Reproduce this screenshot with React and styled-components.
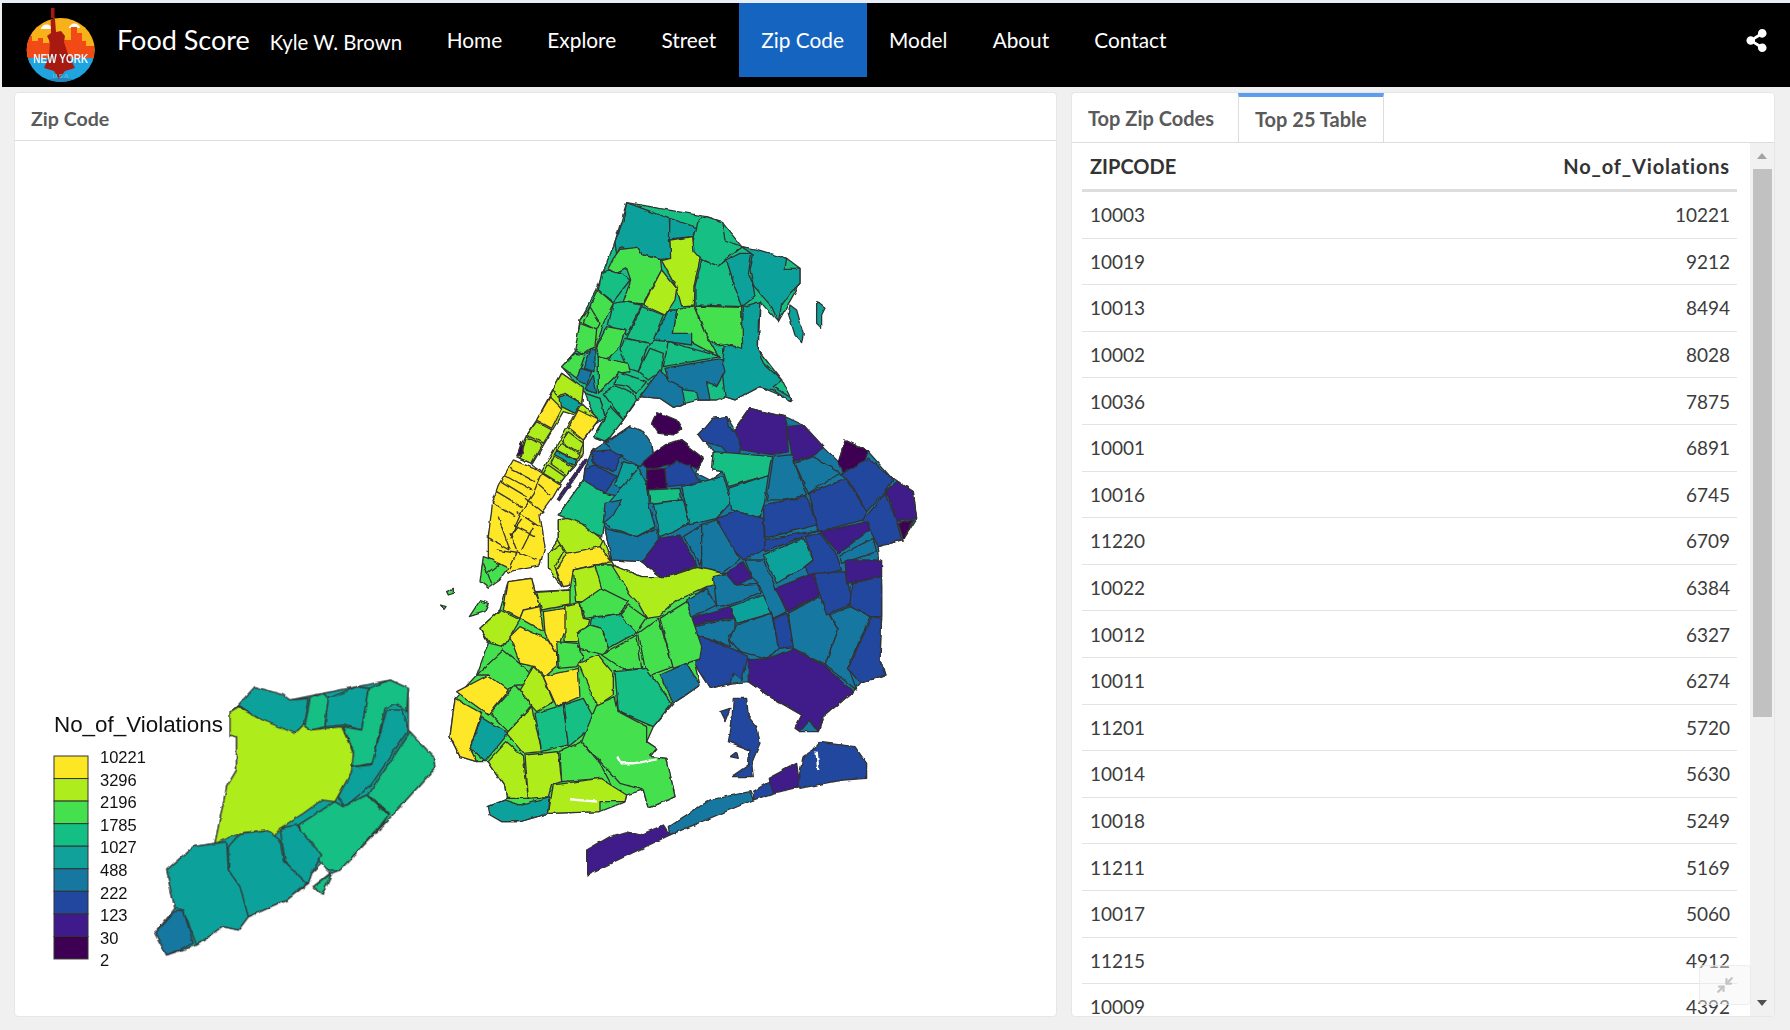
import React from "react";
import styled, { createGlobalStyle } from "styled-components";
import { FaShareAlt } from "react-icons/fa";
import { Minimize2 } from "lucide-react";

const NAV_ITEMS = ["Home", "Explore", "Street", "Zip Code", "Model", "About", "Contact"];

const ROWS = [
  ["10003", 10221], ["10019", 9212], ["10013", 8494], ["10002", 8028], ["10036", 7875],
  ["10001", 6891], ["10016", 6745], ["11220", 6709], ["10022", 6384], ["10012", 6327],
  ["10011", 6274], ["11201", 5720], ["10014", 5630], ["10018", 5249], ["11211", 5169],
  ["10017", 5060], ["11215", 4912], ["10009", 4392]
];

const COLORS = ["#fde725", "#aeec1e", "#44e04e", "#14bf84", "#11a19b", "#1678a1", "#21479f", "#3f1a8a", "#3d0052"];
const LEGEND = ["10221", "3296", "2196", "1785", "1027", "488", "222", "123", "30", "2"];

// land masses go under the zip regions so no seams show between them
const BRONX_QUEENS = [
  [3, "620,38 860,80 905,95 965,170 1100,205 1140,235 1140,280 1075,395 1020,335 1015,480 1085,570 1115,630 1020,590 945,630 915,620 890,630 835,630 795,640 760,652 720,625 660,620 610,690 560,755 520,740 555,680 540,625 495,610 425,530 470,480 480,390 530,300 585,155"],
  [5, "515,785 630,708 695,760 700,790 780,750 850,805 830,850 870,870 910,845 875,840 880,785 840,735 880,685 920,680 945,720 990,655 1095,680 1150,705 1210,770 1255,815 1275,750 1345,785 1420,870 1480,905 1490,985 1450,1050 1375,1070 1385,1185 1385,1280 1380,1410 1395,1455 1320,1480 1300,1505 1210,1580 1195,1625 1140,1625 1145,1575 1050,1520 985,1475 930,1480 870,1495 825,1425 840,1405 800,1230 915,1150 830,1130 730,1165 665,1115 575,1110 555,1015 415,975 490,875 495,835"],
  [1, "385,1090 415,1050 415,990 445,985 550,1050 575,1115 660,1245 540,1175 455,1185 430,1190 405,1130"],
  [4, "620,38 748,85 753,205 722,208 668,195 650,172 625,180 600,172 590,195 585,155 610,90"],
  [4, "750,85 832,113 820,140 760,145 748,155"],
  [3, "860,80 905,95 915,150 965,170 920,205 895,228 845,208 812,183 828,120 835,90"],
  [1, "750,150 818,140 822,185 840,205 822,290 820,345 785,348 770,295 725,212 752,205"],
  [2, "600,178 650,172 668,195 722,210 725,240 668,342 610,335 632,270 620,235 590,250 565,235 580,205"],
  [3, "565,240 610,255 630,270 580,335 535,300 545,250"],
  [1, "725,240 770,295 765,330 735,375 670,345"],
  [3, "845,210 895,228 920,210 945,290 965,350 825,345 825,290"],
  [4, "920,210 960,190 995,190 985,250 1000,290 1005,320 965,350 945,290"],
  [4, "965,170 1010,178 1100,205 1095,235 1140,235 1140,280 1110,310 1085,345 1075,395 1055,350 1020,310 1000,285 990,240 1000,195"],
  [4, "1110,345 1130,360 1150,430 1145,458 1125,435 1105,370"],
  [4, "1190,335 1215,355 1205,375 1205,415 1190,400"],
  [4, "1020,335 1015,400 1015,480 1030,520 1085,570 1060,590 1115,625 1110,635 1060,600 1020,590 945,630 915,620 905,530 910,500 912,470 965,470 970,350"],
  [2, "825,348 965,352 968,475 915,462 885,465 855,430"],
  [2, "770,360 820,348 855,430 895,500 820,460 760,430"],
  [4, "745,360 770,360 760,430 815,430 815,465 745,455 700,450"],
  [3, "580,340 610,335 665,345 620,435 565,405"],
  [3, "665,350 730,375 700,450 690,460 620,445"],
  [2, "535,300 580,340 550,400 545,420 525,480 490,495 470,480 480,390 510,350"],
  [2, "560,410 615,420 600,470 560,510 535,500 530,470"],
  [3, "615,445 690,460 680,475 655,545 625,535 600,480"],
  [3, "690,475 730,490 725,540 685,570 655,545"],
  [3, "745,455 900,500 730,530"],
  [5, "735,535 905,505 915,545 890,590 860,575 870,630 835,630 830,605 795,600 745,570"],
  [5, "720,540 745,570 785,590 795,640 760,652 720,625 660,620"],
  [2, "535,500 625,520 630,545 595,550 535,610"],
  [3, "595,545 680,575 650,610 615,585 585,580"],
  [3, "550,610 590,585 640,610 650,630 610,690 575,645"],
  [3, "495,610 540,625 555,680 530,700"],
  [3, "570,650 610,690 560,755 520,740 545,700"],
  [2, "510,350 540,400 530,420 490,400"],
  [2, "480,400 530,420 525,470 490,495 465,480"],
  [2, "465,490 495,495 470,565 425,530"],
  [5, "515,475 525,480 525,545 490,535"],
  [5, "480,535 515,545 500,585 470,570"],
  [5, "520,555 530,610 495,600"],
  [0, "280,810 340,835 365,850 420,885 400,920 360,975 375,1070 360,1125 280,1140 265,1150 205,1105 205,1040 218,935 235,885"],
  [2, "205,1105 265,1135 240,1170 205,1195 180,1175 190,1100"],
  [5, "630,708 670,725 695,760 700,800 660,830 620,810 575,785 560,760"],
  [6, "515,785 570,780 605,800 580,845 520,820"],
  [6, "495,835 525,825 590,860 555,910 490,875"],
  [4, "610,815 655,830 620,900 585,885"],
  [3, "490,870 555,910 625,925 560,940 545,1040 490,1015 440,985 415,975"],
  [4, "655,835 680,880 685,940 705,1010 650,1040 590,1020 550,1000 565,940"],
  [5, "555,940 605,930 580,975 550,1000"],
  [8, "710,665 770,690 785,715 760,735 715,730 695,700"],
  [8, "735,765 780,750 850,805 835,835 740,825 710,835 680,835 665,820 700,790"],
  [8, "680,840 735,835 740,895 680,900"],
  [6, "770,815 810,825 845,880 790,885 740,890 735,835"],
  [6, "880,685 920,680 925,710 965,740 960,785 940,810 905,770 850,755 835,735 855,715"],
  [7, "990,655 1095,680 1100,700 1105,785 1060,795 965,780 945,720"],
  [7, "1100,710 1150,705 1210,770 1180,800 1120,815"],
  [8, "1275,750 1345,785 1320,840 1270,850 1255,815"],
  [3, "880,785 950,790 1055,800 1045,855 925,890 910,845 875,840"],
  [3, "685,900 780,895 785,930 690,940"],
  [4, "700,940 790,930 810,1000 720,1040"],
  [4, "785,890 910,860 935,935 890,985 810,1005"],
  [4, "925,895 1045,855 1035,930 1020,985 935,960"],
  [5, "1060,800 1115,795 1160,915 1100,930 1040,930"],
  [5, "1125,820 1180,800 1260,850 1165,910"],
  [6, "1260,855 1345,805 1420,870 1395,905 1340,965 1285,865"],
  [6, "1165,910 1280,865 1340,965 1330,990 1195,1025"],
  [6, "1030,945 1160,920 1190,1005 1035,1045"],
  [6, "1395,910 1430,995 1445,1050 1375,1070 1350,1020 1330,990"],
  [7, "1395,905 1435,875 1480,905 1490,985 1430,995 1405,920"],
  [8, "1435,1000 1480,990 1450,1050"],
  [6, "890,985 950,965 1030,985 1035,1075 970,1110 920,1060"],
  [5, "555,1015 650,1040 710,1015 720,1075 665,1115 575,1110"],
  [7, "720,1045 780,1035 830,1125 730,1165 665,1115"],
  [5, "790,1040 845,1005 860,1045 840,1125"],
  [5, "845,1005 890,990 960,1110 890,1160 845,1150"],
  [6, "1035,1050 1195,1020 1150,1040 1035,1085"],
  [4, "1030,1095 1150,1045 1180,1110 1155,1130 1070,1180"],
  [6, "1155,1040 1200,1030 1250,1095 1265,1140 1170,1165 1155,1130 1180,1110"],
  [7, "1200,1025 1345,995 1350,1020 1255,1090"],
  [5, "1260,1095 1360,1045 1370,1085 1265,1120"],
  [1, "415,990 445,985 490,1005 550,1050 535,1080 440,1090 415,1050"],
  [0, "410,1140 440,1090 540,1070 575,1115 530,1125 460,1145 455,1185 430,1190"],
  [1, "385,1090 420,1065 430,1085 405,1130 425,1190 385,1135"],
  [0, "530,1125 575,1125 620,1190 660,1245 600,1210 540,1175"]
];

const MANHATTAN = [
  [1, "185,40 250,85 245,130 295,180 250,240 250,280 225,320 195,350 180,370 130,340 95,310 60,295 50,290 80,225 110,180 150,105"],
  [1, "185,40 250,85 245,130 195,100 175,115 160,90 150,105"],
  [4, "180,115 200,105 245,130 225,160 185,140"],
  [0, "150,110 185,145 155,205 110,180"],
  [0, "235,150 295,180 250,240 205,205"],
  [1, "110,185 155,210 130,250 80,225"],
  [1, "80,230 125,255 95,310 60,295"],
  [8, "65,245 70,280 50,290"],
  [1, "205,215 250,250 240,280 185,245"],
  [1, "185,250 240,285 230,302 170,270"],
  [4, "170,272 230,304 224,316 163,284"],
  [1, "160,288 220,320 200,345 150,310"],
  [1, "145,315 195,350 180,370 130,340"],
  [7, "255,295 262,300 180,420 172,415"]
];

const CENTRAL_PARK = "190,155 222,165 125,335 95,315";

const MANHATTAN_LINES = [
  "30,325 105,365", "15,345 95,390", "5,365 80,410", "-10,395 65,440", "-25,425 45,470",
  "125,340 100,400 70,445 45,500 30,535", "115,375 150,405", "75,415 130,460", "50,455 125,505",
  "40,495 105,530", "100,500 65,570", "65,480 35,520", "30,520 50,570", "10,515 30,570",
  "50,575 110,600", "-5,470 10,515", "-40,530 30,570", "-10,570 50,580 30,625",
  "-40,640 0,610", "-50,610 -25,670"
];

const BROOKLYN = [
  [2, "265,65 335,55 345,95 450,90 460,30 525,15 575,15 665,50 745,50 830,22 920,42 860,80 800,125 845,260 840,295 825,315 840,375 790,410 760,430 700,500 680,545 710,565 690,590 740,595 765,710 685,745 670,690 620,705 615,725 540,755 385,760 300,785 245,785 205,740 255,720 260,715 255,680 205,605 170,605 120,590 90,530 105,415 170,345 205,250 180,205 240,150"],
  [1, "575,15 665,50 745,50 830,22 920,42 915,65 860,80 770,122 715,170 680,175 655,130 625,95"],
  [1, "460,30 525,15 545,85 500,125 470,125"],
  [5, "800,120 860,85 890,135 810,175"],
  [5, "880,50 920,40 950,75 1015,70 1020,100 930,135 890,140"],
  [7, "810,175 930,140 945,170 825,195"],
  [7, "920,40 970,5 995,55 950,75"],
  [5, "975,0 1030,0 1100,155 1060,175 1015,70 995,50"],
  [4, "930,140 1030,105 1055,160 950,190"],
  [7, "1065,85 1180,40 1200,105 1105,155"],
  [6, "1060,175 1100,160 1125,260 1075,265"],
  [5, "1105,160 1195,110 1255,210 1215,315 1120,265"],
  [6, "1180,40 1275,35 1300,130 1220,165 1200,105"],
  [7, "1275,0 1385,0 1385,50 1280,70"],
  [6, "1295,70 1385,50 1385,170 1350,170 1290,140"],
  [5, "1230,165 1290,140 1350,170 1285,320 1310,390 1215,315 1255,210"],
  [6, "1355,170 1385,175 1380,300 1395,345 1320,370 1285,325"],
  [5, "825,200 945,175 945,215 925,230 935,260 825,225"],
  [5, "950,195 1055,160 1075,265 1045,295 960,275 930,240"],
  [6, "825,225 935,265 985,290 965,360 940,340 930,370 870,385 825,315"],
  [7, "985,300 1045,295 1120,265 1215,320 1300,395 1210,470 1195,515 1170,480 1140,515 1125,505 1145,465 1050,410 985,365"],
  [0, "265,65 335,55 345,95 360,130 350,145 310,150 300,175 250,150"],
  [1, "350,97 450,90 450,135 365,150"],
  [0, "310,150 360,140 370,215 300,175"],
  [0, "370,155 435,145 440,200 410,280 375,220"],
  [1, "435,140 480,130 490,175 510,180 495,210 470,245 435,245"],
  [2, "480,130 545,85 625,125 600,160 495,175"],
  [3, "515,175 600,160 655,215 565,265 545,205 510,195"],
  [2, "470,220 510,195 545,205 565,265 550,285 480,265"],
  [2, "625,135 680,175 650,220 600,165"],
  [2, "655,220 715,175 760,320 680,350"],
  [2, "720,175 800,125 845,260 840,295 760,325"],
  [5, "720,345 800,310 840,375 790,410 760,430"],
  [2, "545,285 650,225 665,325 610,330"],
  [1, "180,205 240,150 300,180 265,240 250,260 210,250"],
  [0, "270,230 300,200 385,240 410,280 410,320 375,350 345,320 300,310"],
  [2, "410,245 470,250 490,290 470,320 415,325"],
  [2, "170,345 250,270 310,320 335,345 330,375 290,375 260,390 205,345"],
  [1, "295,395 340,320 370,350 400,425 350,455"],
  [0, "370,350 475,325 480,410 410,440"],
  [1, "475,310 535,285 580,340 580,405 535,435 520,415"],
  [3, "585,335 680,325 755,430 700,500 595,455"],
  [2, "210,460 285,375 335,435 265,515"],
  [0, "110,395 205,345 265,390 205,465"],
  [0, "105,415 185,460 150,565 170,605 120,590 90,530"],
  [4, "185,470 265,520 195,605 150,565"],
  [1, "260,520 335,440 365,575 310,580"],
  [1, "205,605 260,545 310,590 325,715 260,715 255,680"],
  [3, "345,460 430,435 445,555 365,575"],
  [3, "430,435 490,415 530,490 445,560"],
  [2, "530,435 585,410 595,455 680,500 680,545 710,565 690,590 740,595 765,710 685,745 670,690 600,670 545,610 485,545"],
  [2, "420,575 485,545 540,610 585,695 545,655 425,665"],
  [1, "315,585 415,575 425,665 395,675 385,710 325,715"],
  [1, "400,675 540,655 620,705 615,725 540,725 540,755 385,760"],
  [4, "205,740 255,720 300,735 390,710 385,760 300,785 245,785 210,765"],
  [2, "80,95 100,85 100,100 85,105"],
  [2, "62,135 78,140 72,148"],
  [2, "148,170 180,122 208,130 195,155"],
  [6, "940,415 980,415 985,470 1010,500 1020,550 995,610 1000,650 935,650 985,615 990,570 925,545 935,495"],
  [6, "900,455 930,445 915,485"],
  [6, "930,590 950,575 955,595"],
  [7, "500,870 570,830 620,815 660,825 730,795 750,825 500,945"],
  [5, "745,800 870,720 990,695 1000,720 750,825"],
  [6, "1000,695 1055,660 1060,700 1000,720"],
  [7, "1045,655 1130,610 1140,680 1060,700"],
  [6, "1135,660 1150,590 1180,570 1200,547 1305,560 1340,610 1340,655 1270,660 1140,685"]
];

const STATEN = [
  [4, "655,105 705,50 810,90 910,70 1010,50 1110,30 1165,55 1165,180 1240,260 1245,295 1085,470 960,600 935,610 905,675 880,650 930,610 905,580 875,610 865,640 800,690 685,740 655,780 610,770 530,825 440,855 405,790 465,715 450,650 440,600 520,530 585,520 620,350 650,300 650,200 630,200 630,125"],
  [4, "655,105 705,50 790,75 810,90 865,85 850,165 825,190 770,180 715,145"],
  [3, "870,85 910,70 925,85 915,170 875,180 865,205 855,170"],
  [4, "925,85 1010,50 1045,55 1025,180 970,165 915,170"],
  [3, "1045,55 1110,30 1165,55 1160,125 1130,100 1095,115 1075,200 1065,245 1060,280 995,290 1000,245 970,170 1025,180"],
  [4, "1100,120 1145,120 1165,180 1050,350 1030,365 975,410 955,380 1000,290 1055,285"],
  [3, "1170,185 1240,260 1245,295 1085,470 1105,430 1045,375"],
  [1, "655,110 715,145 825,190 850,165 870,180 965,170 1000,250 995,305 945,395 905,390 850,430 780,475 760,505 740,480 660,490 585,520 620,350 650,300 650,200 630,200 630,125"],
  [3, "835,465 945,395 970,410 1040,375 1105,435 1075,475 960,600 920,600 905,580 885,550"],
  [4, "780,475 830,465 905,555 875,610 865,640 835,630 795,570"],
  [4, "625,530 660,490 740,480 780,510 790,570 860,640 800,690 685,740 660,670 625,600"],
  [4, "440,600 520,530 620,515 625,600 660,650 685,740 655,780 610,770 530,825 490,720 465,715 450,650"],
  [5, "405,790 465,725 490,720 520,820 440,855"],
  [3, "880,650 935,610 905,675"]
];

const GlobalStyle = createGlobalStyle`
  html, body {
    margin: 0;
    background: #f0f0f0;
    font-family: "Lato", "Open Sans", sans-serif;
  }
`;

const Page = styled.div`
  width: 1790px;
  height: 1030px;
  overflow: hidden;
  display: flex;
  flex-direction: column;
  border-top: 3px solid #e9edf5;
  box-sizing: border-box;
`;

const Navbar = styled.header`
  flex: 0 0 84px;
  margin-left: 2px;
  background: #000;
  color: #fff;
  display: flex;
  align-items: flex-start;
`;

const Logo = styled.svg`
  width: 80px;
  height: 84px;
  margin-left: 20px;
  flex: none;
  filter: blur(0.4px);
`;

const Brand = styled.div`
  font-size: 27px;
  line-height: 74px;
  margin-left: 15px;
`;

const Author = styled.div`
  font-size: 20.4px;
  line-height: 78px;
  margin-left: 20px;
  margin-right: 22px;
`;

const NavItem = styled.a`
  height: 74px;
  line-height: 74px;
  padding: 0 22.6px;
  font-size: 20.8px;
  background: ${p => (p.$active ? "#1565c0" : "transparent")};
`;

const ShareButton = styled.div`
  margin-left: auto;
  margin-right: 22px;
  height: 74px;
  display: flex;
  align-items: center;
  font-size: 23px;
`;

const Main = styled.main`
  flex: 1;
  min-height: 0;
  display: flex;
  gap: 14px;
  padding: 5px 15px 13px 14px;
`;

const Card = styled.section`
  width: ${p => p.$width}px;
  flex: none;
  box-sizing: border-box;
  background: #fff;
  border: 1px solid #e6e6e6;
  border-radius: 4px;
  display: flex;
  flex-direction: column;
  overflow: hidden;
  position: relative;
`;

const CardHeader = styled.div`
  flex: 0 0 48px;
  box-sizing: border-box;
  border-bottom: 1px solid #ddd;
  padding: 4px 0 0 16px;
  display: flex;
  align-items: center;
  font-size: 19.6px;
  font-weight: 700;
  color: #5a5a5a;
`;

const MapSvg = styled.svg`
  display: block;
  flex: 1;
  min-height: 0;
  width: 100%;
  filter: blur(0.3px);
`;

const Region = styled.polygon`
  stroke: #333;
  stroke-width: 1.3;
  stroke-linejoin: round;
  vector-effect: non-scaling-stroke;
`;

const Border = styled.polyline`
  fill: none;
  stroke: #333;
  stroke-width: 1.3;
  vector-effect: non-scaling-stroke;
`;

const Creek = styled.polyline`
  fill: none;
  stroke: #fff;
  stroke-width: 2.4;
  vector-effect: non-scaling-stroke;
`;

const LegendTitle = styled.text`
  font-family: "Liberation Sans", Arial, sans-serif;
  font-size: 22.4px;
  fill: #111;
`;

const LegendLabel = styled.text`
  font-family: "Liberation Sans", Arial, sans-serif;
  font-size: 16.5px;
  fill: #111;
  dominant-baseline: central;
`;

const TabBar = styled.div`
  flex: 0 0 49px;
  box-sizing: border-box;
  border-bottom: 1px solid #ddd;
  display: flex;
`;

const Tab = styled.div`
  box-sizing: border-box;
  height: ${p => (p.$active ? "49px" : "48px")};
  padding: 0 16px;
  margin-right: ${p => (p.$active ? "0" : "8px")};
  font-size: 20px;
  font-weight: 700;
  color: #5a5a5a;
  line-height: 51px;
  ${p =>
    p.$active &&
    `
    border-top: 4px solid #5c9ded;
    line-height: 45px;
    background: #fff;
    border-left: 1px solid #ddd;
    border-right: 1px solid #ddd;
  `}
`;

const TableArea = styled.div`
  flex: 1;
  min-height: 0;
  display: flex;
`;

const TableWrap = styled.div`
  flex: 1;
  min-width: 0;
  padding: 0 13px 0 10px;
  overflow: hidden;
`;

const HeadRow = styled.div`
  height: 49px;
  box-sizing: border-box;
  border-bottom: 3px solid #ddd;
  display: flex;
  justify-content: space-between;
  align-items: center;
  padding: 0 7px 0 8px;
  font-size: 20px;
  font-weight: 700;
  color: #333;
`;

const CountHead = styled.span`
  letter-spacing: 0.85px;
`;

const Row = styled.div`
  height: 46.6px;
  box-sizing: border-box;
  border-bottom: 1px solid #e3e3e3;
  display: flex;
  justify-content: space-between;
  align-items: center;
  padding: 0 7px 0 8px;
  font-size: 19px;
  color: #3c3c3c;
`;

const ScrollBar = styled.div`
  flex: 0 0 24px;
  background: #f1f1f1;
  display: flex;
  flex-direction: column;
`;

const ScrollArrow = styled.div`
  flex: 0 0 ${p => (p.$down ? "auto" : "26px")};
  margin-top: ${p => (p.$down ? "auto" : "0")};
  height: 26px;
  display: flex;
  align-items: center;
  justify-content: center;
  &::before {
    content: "";
    border-left: 5px solid transparent;
    border-right: 5px solid transparent;
    ${p => (p.$down ? "border-top: 6px solid #505050;" : "border-bottom: 6px solid #a3a3a3;")}
  }
`;

const ScrollThumb = styled.div`
  flex: 0 0 548px;
  margin: 0 2px 0 3px;
  background: #c1c1c1;
`;

const RestoreButton = styled.div`
  position: absolute;
  right: 23px;
  bottom: 11px;
  width: 52px;
  height: 40px;
  box-sizing: border-box;
  border: 1px solid rgba(230, 230, 230, 0.6);
  border-radius: 4px;
  background: rgba(245, 245, 245, 0.45);
  display: flex;
  align-items: center;
  justify-content: center;
  color: #c4c4c4;
`;

const LogoText = styled.text`
  font-family: "Liberation Sans", Arial, sans-serif;
  font-weight: 700;
  text-anchor: middle;
  fill: ${p => p.$color};
  font-size: ${p => p.$size}px;
`;

const NewYorkLogo = () => (
  <Logo viewBox="0 0 80 84">
    <defs>
      <clipPath id="badge">
        <ellipse cx="38.7" cy="47" rx="34" ry="32" />
      </clipPath>
    </defs>
    <g clipPath="url(#badge)">
      <rect x="0" y="10" width="80" height="45" fill="#f7b21a" />
      <path d="M19 26a5 4 0 0 1 11 0z M47 25a5 4 0 0 1 11 0z" fill="#fff" />
      <path d="M0 60V37h6v-4h4v5h6v-3h5v5h6v-3h22V24h6v6h5v8h4v5h8v17z" fill="#f24a17" />
      <rect x="0" y="55" width="80" height="30" fill="#1ea5e0" />
      <path d="M12 84c8-12 46-12 54 0z" fill="#2285bc" />
      <path d="M28.5 10h4l1.500 19 5-1 4 5-1 6 4 12 7 14-10 3-6 8-5-8-10-3 5-12 1-14-3-6 4-3z" fill="#a81a10" />
    </g>
    <rect x="29" y="5" width="3.5" height="10" fill="#a81a10" />
    <LogoText x="38.7" y="60" $color="#e6f3fb" $size="13" textLength="55" lengthAdjust="spacingAndGlyphs">NEW YORK</LogoText>
    <LogoText x="38.7" y="75" $color="#5db8e6" $size="6" textLength="16">USA</LogoText>
  </Logo>
);

const Group = ({ transform, regions, children }) => (
  <g transform={transform}>
    {regions.map(([color, points], i) => (
      <Region key={i} points={points} fill={COLORS[color]} />
    ))}
    {children}
  </g>
);

const NycMap = () => (
  <MapSvg viewBox="15 141 1041 875" preserveAspectRatio="none">
    <defs>
      {/* the borders in the source map are jagged, not straight */}
      <filter id="rough" x="0" y="0" width="1100" height="1100" filterUnits="userSpaceOnUse" primitiveUnits="userSpaceOnUse">
        <feTurbulence type="fractalNoise" baseFrequency="0.11" numOctaves="2" seed="4" />
        <feDisplacementMap in="SourceGraphic" scale="3.5" xChannelSelector="R" yChannelSelector="G" />
      </filter>
    </defs>
    <g filter="url(#rough)">
      <Group transform="translate(420 190) scale(.3333)" regions={BRONX_QUEENS} />
      <Group transform="translate(500 360) scale(.3333)" regions={MANHATTAN}>
        <Region points={CENTRAL_PARK} fill="#fff" />
        {MANHATTAN_LINES.map(l => (
          <Border key={l} points={l} />
        ))}
      </Group>
      <Group transform="translate(420 560) scale(.3333)" regions={BROOKLYN}>
        <Creek points="595,590 605,610 640,610 710,598" />
        <Creek points="450,718 530,725" />
        <Creek points="1190,575 1195,630" />
      </Group>
      <Group transform="translate(20 670) scale(.3333)" regions={STATEN} />
    </g>
    <LegendTitle x="54" y="732">No_of_Violations</LegendTitle>
    {COLORS.slice(0, 9).map((c, i) => (
      <rect key={c} x="54" y={756 + i * 22.55} width="34" height="22.55" fill={c} stroke="#333" strokeWidth="1" />
    ))}
    {LEGEND.map((label, i) => (
      <LegendLabel key={label} x="100" y={757 + i * 22.6}>{label}</LegendLabel>
    ))}
  </MapSvg>
);

export default function App() {
  return (
    <>
      <GlobalStyle />
      <Page>
        <Navbar>
          <NewYorkLogo />
          <Brand>Food Score</Brand>
          <Author>Kyle W. Brown</Author>
          {NAV_ITEMS.map(item => (
            <NavItem key={item} $active={item === "Zip Code"}>{item}</NavItem>
          ))}
          <ShareButton>
            <FaShareAlt />
          </ShareButton>
        </Navbar>
        <Main>
          <Card $width={1043}>
            <CardHeader>Zip Code</CardHeader>
            <NycMap />
          </Card>
          <Card $width={704}>
            <TabBar>
              <Tab>Top Zip Codes</Tab>
              <Tab $active>Top 25 Table</Tab>
            </TabBar>
            <TableArea>
              <TableWrap>
                <HeadRow>
                  <span>ZIPCODE</span>
                  <CountHead>No_of_Violations</CountHead>
                </HeadRow>
                {ROWS.map(([zip, count]) => (
                  <Row key={zip}>
                    <span>{zip}</span>
                    <span>{count}</span>
                  </Row>
                ))}
              </TableWrap>
              <ScrollBar>
                <ScrollArrow />
                <ScrollThumb />
                <ScrollArrow $down />
              </ScrollBar>
            </TableArea>
            <RestoreButton>
              <Minimize2 size={18} strokeWidth={3} />
            </RestoreButton>
          </Card>
        </Main>
      </Page>
    </>
  );
}
